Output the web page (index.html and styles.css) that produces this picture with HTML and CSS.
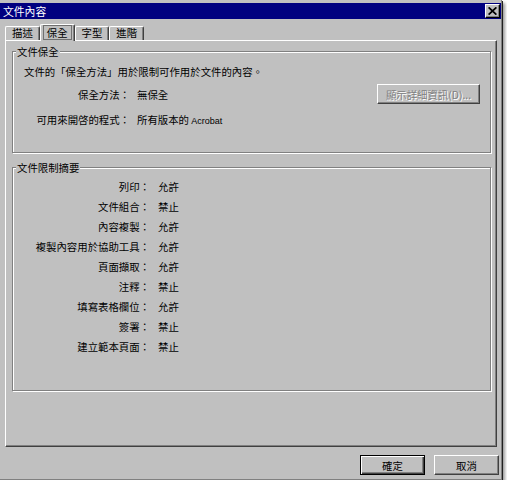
FILE: index.html
```html
<!DOCTYPE html>
<html lang="zh-Hant">
<head>
<meta charset="utf-8">
<title>文件內容</title>
<link rel="stylesheet" href="styles.css">
</head>
<body>
<div class="window">
  <div class="titlebar">
    <span class="title">文件內容</span>
    <span class="close"><svg width="9" height="8" viewBox="0 0 9 8"><path d="M0.6 0.4L8.4 7.6M8.4 0.4L0.6 7.6" stroke="#000" stroke-width="1.8" fill="none"/></svg></span>
  </div>
  <div class="tabs">
    <div class="tab">描述</div>
    <div class="tab active"><span class="focus">保全</span></div>
    <div class="tab">字型</div>
    <div class="tab">進階</div>
  </div>
  <div class="panel">
    <div class="group g1">
      <span class="legend">文件保全</span>
      <p class="intro">文件的「保全方法」用於限制可作用於文件的內容。</p>
      <div class="sec-grid">
        <span class="lbl">保全方法：</span>
        <span class="val">無保全</span>
        <span class="btn disabled">顯示詳細資訊(D)...</span>
        <span class="lbl">可用來開啓的程式：</span>
        <span class="val">所有版本的 <span class="latin">Acrobat</span></span>
        <span></span>
      </div>
    </div>
    <div class="group g2">
      <span class="legend">文件限制摘要</span>
      <div class="sum-grid">
        <span class="lbl">列印：</span><span class="val">允許</span>
        <span class="lbl">文件組合：</span><span class="val">禁止</span>
        <span class="lbl">內容複製：</span><span class="val">允許</span>
        <span class="lbl">複製內容用於協助工具：</span><span class="val">允許</span>
        <span class="lbl">頁面擷取：</span><span class="val">允許</span>
        <span class="lbl">注釋：</span><span class="val">禁止</span>
        <span class="lbl">填寫表格欄位：</span><span class="val">允許</span>
        <span class="lbl">簽署：</span><span class="val">禁止</span>
        <span class="lbl">建立範本頁面：</span><span class="val">禁止</span>
      </div>
    </div>
  </div>
  <div class="footer">
    <button class="btn default">確定</button>
    <button class="btn">取消</button>
  </div>
</div>
</body>
</html>
```

FILE: styles.css
```css
* { box-sizing: border-box; }
html, body { margin: 0; padding: 0; background: #fff; }
body {
  font-family: "Noto Sans CJK TC", "Noto Sans", sans-serif;
  font-size: 10.4px;
  color: #000;
}
.window {
  width: 502px;
  height: 480px;
  background: #c0c0c0;
  padding-top: 3px;
  border-right: 1px solid #808080;
  border-bottom: 1px solid #808080;
  box-shadow: 1px 1px 0 #202020, 3px 3px 3px rgba(0,0,0,0.4);
}
.titlebar {
  height: 16px;
  background: #000080;
  display: flex;
  align-items: center;
  justify-content: space-between;
}
.title {
  color: #fff;
  padding-left: 3px;
  line-height: 16px;
  font-size: 10.8px;
}
.close {
  width: 15px;
  height: 14px;
  margin-right: 1px;
  background: #c0c0c0;
  border: 1px solid;
  border-color: #fff #000 #000 #fff;
  box-shadow: inset -1px -1px 0 #808080;
  display: flex;
  align-items: center;
  justify-content: center;
}
.close svg { display: block; }
.tabs {
  height: 21px;
  display: flex;
  align-items: flex-end;
  padding-left: 5px;
}
.tab {
  height: 14px;
  padding: 0 6px;
  line-height: 12px;
  border-top: 1px solid #fff;
  border-left: 1px solid #fff;
  border-right: 1px solid #404040;
  box-shadow: inset -1px 0 0 #808080;
  border-radius: 2px 2px 0 0;
  background: #c0c0c0;
}
.tab.active {
  height: 17px;
  margin-bottom: -1px;
  padding: 0 2px;
  position: relative;
  z-index: 1;
  display: flex;
  align-items: flex-start;
}
.focus {
  border: 1px solid #707070;
  padding: 0 3px;
  line-height: 13px;
  height: 15px;
}
.panel {
  margin-left: 5px;
  width: 492px;
  height: 407px;
  border: 1px solid;
  border-color: #fff #404040 #404040 #fff;
  box-shadow: inset -1px -1px 0 #808080;
  padding: 10px 0 0 6px;
}
.group {
  position: relative;
  width: 479px;
  border: 1px solid #808080;
  box-shadow: 1px 1px 0 #fff, inset 1px 1px 0 #fff;
}
.legend {
  position: absolute;
  top: -7px;
  left: 3px;
  padding: 0 1px;
  background: #c0c0c0;
  line-height: 13px;
}
.g1 {
  height: 102px;
  padding: 10px 10px 0 0;
}
.intro {
  margin: 0;
  padding-left: 11px;
  line-height: 20px;
}
.sec-grid {
  margin-top: 2px;
  display: grid;
  grid-template-columns: 117px 1fr 103px;
  grid-auto-rows: 20px;
  column-gap: 7px;
  row-gap: 5px;
  align-items: center;
}
.lbl { text-align: right; white-space: nowrap; }
.val { white-space: nowrap; }
.latin { font-family: "Liberation Sans", Arial, sans-serif; font-size: 9px; }
.g2 {
  margin-top: 14px;
  height: 224px;
  padding-top: 9px;
}
.sum-grid {
  display: grid;
  grid-template-columns: 137px 1fr;
  grid-auto-rows: 19.9px;
  column-gap: 8px;
  align-items: center;
}
.btn {
  height: 20px;
  font-family: inherit;
  font-size: 10.4px;
  background: #c0c0c0;
  color: #000;
  padding: 0;
  margin: 0;
  border: 1px solid;
  border-color: #fff #404040 #404040 #fff;
  box-shadow: inset -1px -1px 0 #808080;
  display: flex;
  align-items: center;
  justify-content: center;
  white-space: nowrap;
}
.btn.disabled {
  color: #808080;
  text-shadow: 1px 1px 0 #fff;
}
.footer {
  margin-top: 8px;
  display: flex;
  justify-content: flex-end;
  gap: 9px;
  padding-right: 2px;
}
.footer .btn { width: 65px; }
.btn.default {
  border: 1px solid #000;
  box-shadow: inset 1px 1px 0 #fff, inset -1px -1px 0 #404040, inset -2px -2px 0 #808080;
}
```
